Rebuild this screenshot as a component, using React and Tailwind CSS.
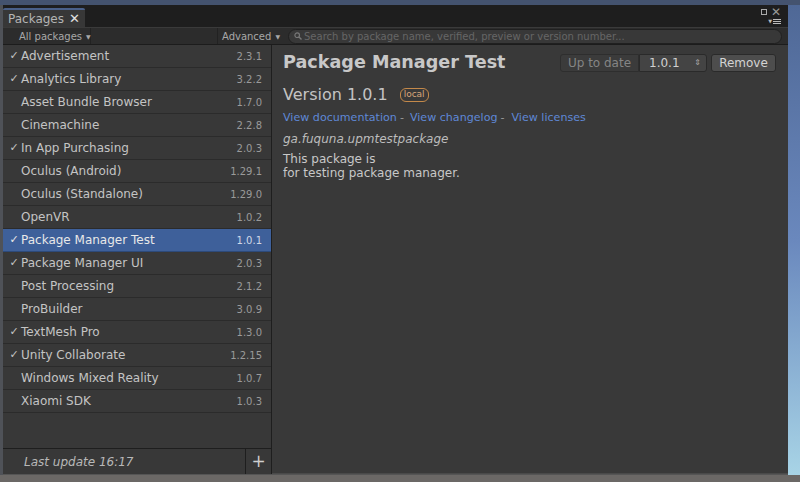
import React from "react";

const packages = [
  { name: "Advertisement", v: "2.3.1", c: true },
  { name: "Analytics Library", v: "3.2.2", c: true },
  { name: "Asset Bundle Browser", v: "1.7.0" },
  { name: "Cinemachine", v: "2.2.8" },
  { name: "In App Purchasing", v: "2.0.3", c: true },
  { name: "Oculus (Android)", v: "1.29.1" },
  { name: "Oculus (Standalone)", v: "1.29.0" },
  { name: "OpenVR", v: "1.0.2" },
  { name: "Package Manager Test", v: "1.0.1", c: true, sel: true },
  { name: "Package Manager UI", v: "2.0.3", c: true },
  { name: "Post Processing", v: "2.1.2" },
  { name: "ProBuilder", v: "3.0.9" },
  { name: "TextMesh Pro", v: "1.3.0", c: true },
  { name: "Unity Collaborate", v: "1.2.15", c: true },
  { name: "Windows Mixed Reality", v: "1.0.7" },
  { name: "Xiaomi SDK", v: "1.0.3" },
];

const font = { fontFamily: '"DejaVu Sans", "Liberation Sans", sans-serif' };

export default function App() {
  return (
    <div className="w-[800px] h-[482px] overflow-hidden flex flex-col bg-[#6b6866]" style={font}>
      <div className="h-[5px] bg-[#44536f] shrink-0" />
      <div className="flex flex-1 min-h-0">
        <div className="w-[788px] flex flex-col bg-[#1f1f1f] border-l-[3px] border-[#4f5258]">
          {/* tab bar */}
          <div className="h-[22px] flex items-end justify-between shrink-0 bg-[#1e1e1e] relative">
            <div className="h-[19px] w-[82px] bg-[#373737] border-t-2 border-[#4a6089] flex items-center px-[5px] text-[12px] text-[#b4b4b4] rounded-t-[2px]">
              <span>Packages</span>
              <span className="ml-auto text-[#e0e0e0] text-[13px] font-bold leading-none">✕</span>
            </div>
            <div className="absolute right-[7px] top-[1px] flex flex-col items-end">
              <div className="flex items-center gap-[4px]">
                <div className="w-[6px] h-[6px] border border-[#aaa]" />
                <span className="text-[#999] text-[12px] leading-none">✕</span>
              </div>
              <div className="flex items-center gap-[1px] mt-[1px]">
                <span className="text-[#bbb] text-[5px] leading-none">▼</span>
                <div className="flex flex-col gap-[1px]">
                  <div className="w-[8px] h-[1px] bg-[#bbb]" />
                  <div className="w-[8px] h-[1px] bg-[#bbb]" />
                  <div className="w-[8px] h-[1px] bg-[#bbb]" />
                </div>
              </div>
            </div>
          </div>
          {/* toolbar */}
          <div className="h-[18px] shrink-0 flex items-center bg-[#2c2c2c] border-t border-[#3a3a3a] border-b border-b-[#1c1c1c] text-[10px] text-[#a8a8a8] whitespace-nowrap">
            <div className="w-[88px] h-full flex items-center pl-[16px] border-r border-[#222]">
              All packages <span className="ml-[4px] text-[6px]">▼</span>
            </div>
            <div className="flex-1" />
            <div className="h-full flex items-center px-[4px] border-l border-[#222]">
              Advanced <span className="ml-[4px] text-[6px]">▼</span>
            </div>
            <div className="w-[494px] shrink-0 mr-[6px] h-[15px] rounded-full bg-[#383838] border border-[#202020] flex items-center pl-[5px] text-[#666] text-[10px] ml-[4px] overflow-hidden">
              <svg width="8" height="8" viewBox="0 0 8 8" className="mr-[2px] shrink-0">
                <circle cx="3.2" cy="3.2" r="2.3" stroke="#777" strokeWidth="1.2" fill="none" />
                <path d="M5 5 L7.5 7.5" stroke="#777" strokeWidth="1.4" />
              </svg>
              Search by package name, verified, preview or version number...
            </div>
          </div>
          {/* content */}
          <div className="flex flex-1 min-h-0">
            {/* list */}
            <div className="w-[269px] flex flex-col bg-[#383838] border-r border-[#1e1e1e]">
              <div className="flex-1 flex flex-col">
                {packages.map((p) => (
                  <div
                    key={p.name}
                    className={`h-[23px] flex items-center border-b text-[12px] ${
                      p.sel ? "bg-[#3e609a] border-[#2d4a7a] text-[#e8e8e8]" : "border-[#2b2b2b] text-[#c4c4c4]"
                    }`}
                  >
                    <span className="w-[18px] text-center text-[11px] pl-[4px]">{p.c ? "✓" : ""}</span>
                    <span className="flex-1">{p.name}</span>
                    <span className={`text-[10px] mr-[9px] ${p.sel ? "text-[#d0d8e8]" : "text-[#9a9a9a]"}`}>{p.v}</span>
                  </div>
                ))}
              </div>
              <div className="h-[26px] flex border-t border-[#1e1e1e] bg-[#383838]">
                <div className="flex-1 flex items-center pl-[21px] italic text-[12px] text-[#b8b8b8]">Last update 16:17</div>
                <div className="w-[26px] border-l border-[#1e1e1e] flex items-center justify-center text-[#cfcfcf] text-[17px]">+</div>
              </div>
            </div>
            {/* detail */}
            <div className="flex-1 bg-[#393939] pl-[11px] pr-[12px] pt-[6px] border-b border-[#4a4a4a]">
              <div className="flex items-center justify-between h-[22px]">
                <div className="text-[17.6px] font-bold text-[#c8c8c8]">Package Manager Test</div>
                <div className="flex items-center text-[12px] mt-[1px]">
                  <div className="h-[18px] w-[79px] flex items-center justify-center bg-[#3b3b3b] border border-[#2e2e2e] rounded-l-[3px] text-[#858585]">Up to date</div>
                  <div className="h-[18px] w-[68px] flex items-center pl-[9px] bg-[#444] border border-[#2a2a2a] rounded-r-[3px] text-[#d0d0d0]">
                    1.0.1<span className="ml-auto mr-[5px] text-[8px] text-[#aaa] leading-none">⇕</span>
                  </div>
                  <div className="h-[18px] w-[65px] ml-[4px] flex items-center justify-center bg-[#4d4d4d] border border-[#2a2a2a] rounded-[3px] text-[#d4d4d4]">Remove</div>
                </div>
              </div>
              <div className="flex items-center mt-[12px] h-[20px]">
                <span className="text-[16px] text-[#c4c4c4]">Version 1.0.1</span>
                <span className="ml-[12px] h-[14px] px-[3px] flex items-center rounded-[6px] border border-[#c4894a] text-[#d8a779] text-[9px]">local</span>
              </div>
              <div className="mt-[5px] text-[11.1px] text-[#5f88d6] flex items-center h-[16px] whitespace-nowrap">
                <span>View documentation</span>
                <span className="text-[#999] ml-[3px] mr-[6px]">-</span>
                <span>View changelog</span>
                <span className="text-[#999] ml-[3px] mr-[7px]">-</span>
                <span>View licenses</span>
              </div>
              <div className="mt-[4px] text-[12px] italic text-[#bcbcbc] h-[16px]">ga.fuquna.upmtestpackage</div>
              <div className="mt-[6px] text-[12px] text-[#c8c8c8] leading-[14px]">
                This package is
                <br />
                for testing package manager.
              </div>
            </div>
          </div>
          <div className="h-[1px] bg-[#555]" />
        </div>
        <div className="flex-1 bg-gradient-to-b from-[#4f6896] via-[#6a88bd] to-[#a8d4e6]" />
      </div>
      <div className="h-[7px] bg-[#6b6866] shrink-0" />
    </div>
  );
}
